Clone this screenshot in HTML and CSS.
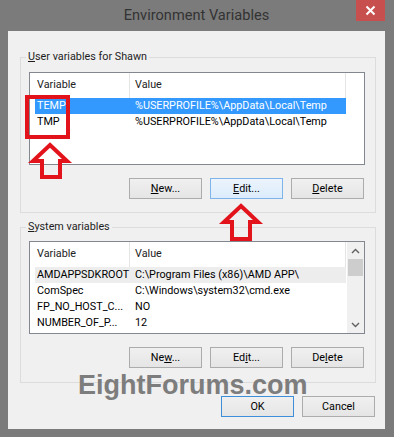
FILE: index.html
```html
<!DOCTYPE html>
<html>
<head>
<meta charset="utf-8">
<link rel="stylesheet" href="styles.css">
</head>
<body>
<div class="window">
  <div class="titlebar">
    <span class="title">Environment Variables</span>
    <div class="close">
      <svg width="11" height="11" viewBox="0 0 11 11"><path d="M1.5 1.5 L9.5 9.5 M9.5 1.5 L1.5 9.5" stroke="#fff" stroke-width="2" fill="none"/></svg>
    </div>
  </div>
  <div class="client">
    <fieldset class="group g-user">
      <legend><u>U</u>ser variables for Shawn</legend>
      <div class="list">
        <div class="lv-main">
          <div class="lv-head"><span class="h1">Variable</span><span class="h2">Value</span></div>
          <div class="row sel"><span class="c1">TEMP</span><span class="c2">%USERPROFILE%\AppData\Local\Temp</span></div>
          <div class="row"><span class="c1">TMP</span><span class="c2">%USERPROFILE%\AppData\Local\Temp</span></div>
        </div>
      </div>
      <div class="btns">
        <button class="btn"><u>N</u>ew...</button>
        <button class="btn hot"><u>E</u>dit...</button>
        <button class="btn"><u>D</u>elete</button>
      </div>
    </fieldset>
    <fieldset class="group g-sys">
      <legend><u>S</u>ystem variables</legend>
      <div class="list">
        <div class="lv-main">
          <div class="lv-head"><span class="h1">Variable</span><span class="h2">Value</span></div>
          <div class="row inactive"><span class="c1">AMDAPPSDKROOT</span><span class="c2">C:\Program Files (x86)\AMD APP\</span></div>
          <div class="row"><span class="c1">ComSpec</span><span class="c2">C:\Windows\system32\cmd.exe</span></div>
          <div class="row"><span class="c1">FP_NO_HOST_C...</span><span class="c2">NO</span></div>
          <div class="row"><span class="c1">NUMBER_OF_P...</span><span class="c2">12</span></div>
        </div>
        <div class="sb">
          <div class="sb-arrow"><svg width="9" height="6" viewBox="0 0 9 6"><path d="M1 5 L4.5 1.5 L8 5" stroke="#606060" stroke-width="1.4" fill="none"/></svg></div>
          <div class="sb-thumb"></div>
          <div class="sb-track"></div>
          <div class="sb-arrow"><svg width="9" height="6" viewBox="0 0 9 6"><path d="M1 1 L4.5 4.5 L8 1" stroke="#606060" stroke-width="1.4" fill="none"/></svg></div>
        </div>
      </div>
      <div class="btns">
        <button class="btn">Ne<u>w</u>...</button>
        <button class="btn">Ed<u>i</u>t...</button>
        <button class="btn">De<u>l</u>ete</button>
      </div>
    </fieldset>
    <div class="dialog-btns">
      <button class="btn default">OK</button>
      <button class="btn">Cancel</button>
    </div>
  </div>
  <div class="watermark">EightForums.com</div>
  <svg class="annot" width="394" height="437" viewBox="0 0 394 437">
    <rect x="27" y="97" width="41" height="40" fill="none" stroke="#e3131b" stroke-width="4"/>
    <path d="M50 145 L67 161 L60 161 L60 177 L42 177 L42 161 L33 161 Z" fill="none" stroke="#e3131b" stroke-width="4"/>
    <path d="M241 206 L258 222 L250 222 L250 239 L232 239 L232 222 L224 222 Z" fill="none" stroke="#e3131b" stroke-width="4"/>
  </svg>
</div>
</body>
</html>
```
FILE: styles.css
```css
body {
  margin: 0;
  background: #7b7b7b;
}
.window {
  position: relative;
  width: 394px;
  height: 437px;
  box-sizing: border-box;
  padding: 0 9px 8px 8px;
  background: #7b7b7b;
  display: flex;
  flex-direction: column;
  font-family: Roboto, "Liberation Sans", sans-serif;
  font-size: 10.8px;
  color: #000;
}
.titlebar {
  height: 31px;
  flex: none;
  display: flex;
  align-items: center;
  justify-content: center;
}
.title {
  font-size: 14.6px;
  color: #333;
  margin-top: -1px;
}
.close {
  position: absolute;
  top: 0;
  right: 9px;
  width: 29px;
  height: 21px;
  background: #c7504f;
  display: flex;
  align-items: center;
  justify-content: center;
}
.client {
  flex: 1;
  background: #f0f0f0;
  padding: 18px 9px 0 12px;
  display: flex;
  flex-direction: column;
}
.group {
  margin: 0;
  min-width: 0;
  border: 1px solid #dcdcdc;
  padding: 7px 10px 13px 8px;
}
.g-sys {
  margin-top: 6px;
  padding-top: 6px;
  padding-bottom: 14px;
}
legend {
  padding: 0 2px;
  margin-left: -3px;
  line-height: 16px;
  color: #1e1e1e;
}
.list {
  height: 93px;
  box-sizing: border-box;
  border: 1px solid #828790;
  background: #fff;
  display: flex;
}
.lv-main {
  flex: 1;
}
.lv-head {
  height: 25px;
  display: flex;
}
.lv-head span {
  line-height: 24px;
  box-sizing: border-box;
  border-right: 1px solid #e5e5e5;
  color: #222;
}
.h1 {
  width: 100px;
  padding-left: 7px;
}
.h2 {
  width: 216px;
  padding-left: 5px;
}
.row {
  margin-left: 5px;
  width: 311px;
  height: 16px;
  line-height: 16px;
  display: flex;
  white-space: nowrap;
}
.c1 {
  width: 94px;
  padding-left: 2px;
  box-sizing: border-box;
}
.c2 {
  padding-left: 6px;
}
.row.sel {
  background: #3399ff;
  color: #fff;
}
.row.inactive {
  background: #ededed;
}
.sb {
  width: 17px;
  background: #f0f0f0;
  display: flex;
  flex-direction: column;
  align-items: center;
}
.sb-arrow {
  height: 17px;
  width: 17px;
  display: flex;
  align-items: center;
  justify-content: center;
}
.sb-thumb {
  width: 15px;
  height: 17px;
  background: #cdcdcd;
}
.sb-track {
  flex: 1;
}
.btns {
  display: flex;
  justify-content: flex-end;
  gap: 8px;
  margin-top: 13px;
  margin-right: 1px;
}
.btn {
  width: 73px;
  height: 21px;
  box-sizing: border-box;
  border: 1px solid #acacac;
  background: linear-gradient(#f0f0f0, #e5e5e5);
  font-family: inherit;
  font-size: 10.8px;
  color: #000;
  padding: 0;
}
.btn.hot {
  border-color: #7eb4ea;
  background: linear-gradient(#ecf4fc, #dcecfc);
}
.btn.default {
  border-color: #3c8fd8;
}
.dialog-btns {
  display: flex;
  justify-content: flex-end;
  gap: 8px;
  margin-top: 13px;
  margin-right: 1px;
}
.watermark {
  position: absolute;
  left: 78px;
  top: 369px;
  font-family: "Liberation Sans", sans-serif;
  font-weight: bold;
  font-size: 27px;
  line-height: 32px;
  color: #7d7d7d;
}
.annot {
  position: absolute;
  left: 0;
  top: 0;
  pointer-events: none;
}
```
